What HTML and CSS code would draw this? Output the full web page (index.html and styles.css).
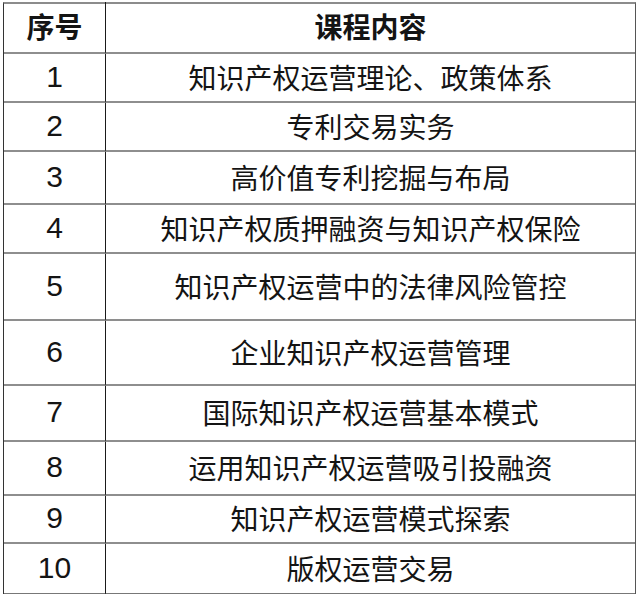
FILE: index.html
```html
<!DOCTYPE html>
<html lang="zh">
<head>
<meta charset="utf-8">
<link rel="stylesheet" href="styles.css">
</head>
<body>
<div class="table">
  <div class="cell num head r0">序号</div><div class="cell txt head r0">课程内容</div>
  <div class="cell num">1</div><div class="cell txt">知识产权运营理论、政策体系</div>
  <div class="cell num">2</div><div class="cell txt">专利交易实务</div>
  <div class="cell num">3</div><div class="cell txt">高价值专利挖掘与布局</div>
  <div class="cell num">4</div><div class="cell txt">知识产权质押融资与知识产权保险</div>
  <div class="cell num">5</div><div class="cell txt">知识产权运营中的法律风险管控</div>
  <div class="cell num">6</div><div class="cell txt">企业知识产权运营管理</div>
  <div class="cell num">7</div><div class="cell txt">国际知识产权运营基本模式</div>
  <div class="cell num">8</div><div class="cell txt">运用知识产权运营吸引投融资</div>
  <div class="cell num">9</div><div class="cell txt">知识产权运营模式探索</div>
  <div class="cell num last">10</div><div class="cell txt last">版权运营交易</div>
</div>
</body>
</html>
```
FILE: styles.css
```css
html, body {
  margin: 0;
  padding: 0;
  background: #ffffff;
}
.table {
  margin: 2px 0 0 3px;
  width: 633px;
  box-sizing: border-box;
  display: grid;
  grid-template-columns: 102px 1fr;
  grid-template-rows: 50px 49px 49px 53px 49px 67px 65px 56px 54px 48px 51px;
  border-top: 2px solid #8c8c8c;
  border-left: 1px solid #333;
  border-right: 1px solid #555;
  color: #141414;
  font-family: "Noto Sans CJK SC", "Liberation Sans", sans-serif;
  font-size: 28px;
}
.table .r0 {
  margin-top: -2px;
}
.cell {
  box-sizing: border-box;
  display: flex;
  align-items: center;
  justify-content: center;
  border-bottom: 2px solid #8e8e8e;
  line-height: 1;
  padding-bottom: 2px;
}
.num {
  border-right: 1px solid #1a1a1a;
  font-family: "Liberation Sans", sans-serif;
  font-size: 30px;
}
.head {
  font-family: "Noto Sans CJK SC", sans-serif;
  font-weight: 700;
  font-size: 28px;
}
.last {
  border-bottom: 2px solid #777;
}
```
